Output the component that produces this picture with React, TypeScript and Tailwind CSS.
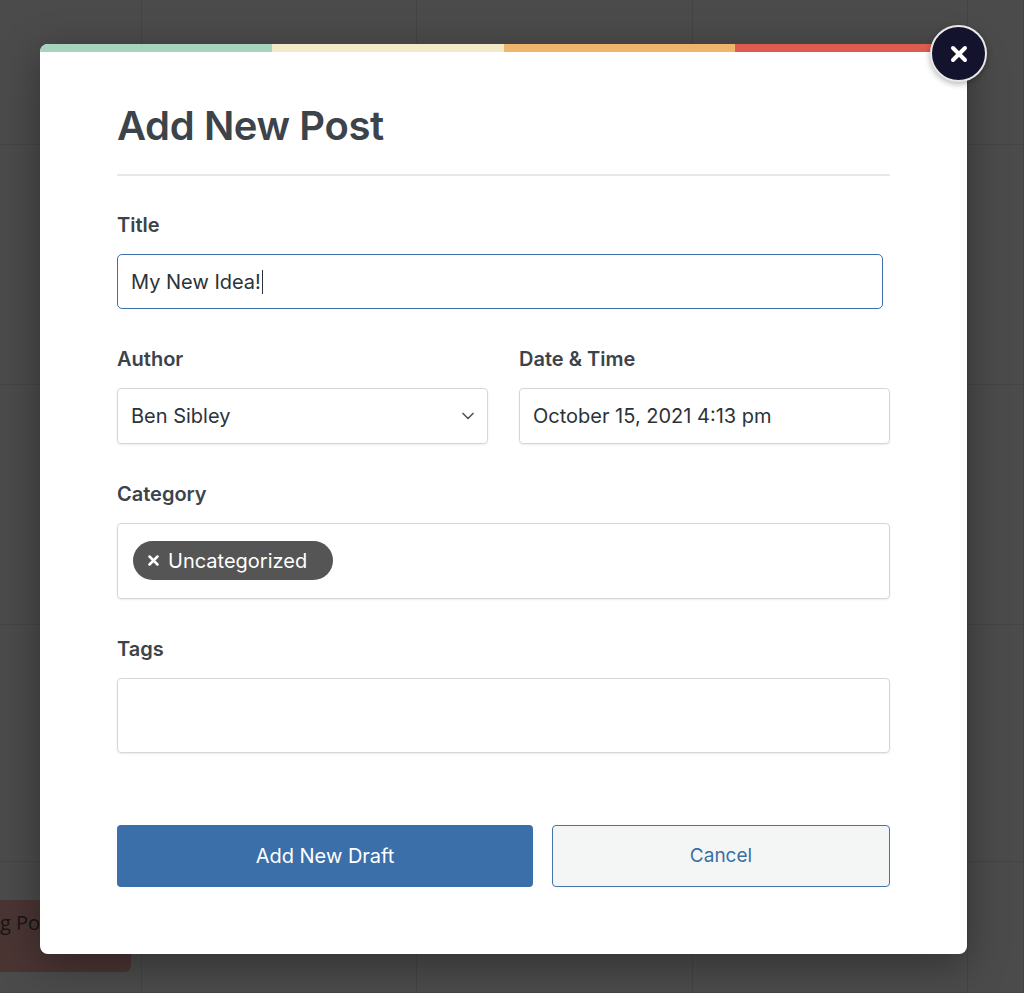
import { ChevronDown } from "lucide-react"

const cells = Array.from({ length: 25 }, (_, i) => i)

function Field({ label, children }: { label: string; children: React.ReactNode }) {
  return (
    <div className="mt-[36px]">
      <div className="text-[20px] leading-[28px] font-semibold text-[#3c434a] mb-[15px]">{label}</div>
      {children}
    </div>
  )
}

export default function App() {
  return (
    <div className="relative w-[1024px] h-[993px] overflow-hidden bg-[#4b4b4b] font-['Inter',sans-serif]">
      {/* calendar behind the overlay */}
      <div className="grid grid-cols-[142px_275px_276px_275px_1fr] grid-rows-[145px_240px_240px_237px_1fr] h-full">
        {cells.map((i) => (
          <div key={i} className="border-r border-b border-[#444444]">
            {i === 20 && (
              <div className="mt-[38px] h-[72px] w-[131px] bg-[#4a3533] rounded-br-md overflow-hidden">
                <div className="mt-[8px] whitespace-nowrap text-[20px] text-[#161616] font-['Open_Sans',sans-serif]">
                  g Post
                </div>
              </div>
            )}
          </div>
        ))}
      </div>

      {/* modal */}
      <div className="absolute left-[40px] top-[44px] w-[927px] bg-white rounded-lg shadow-[0_10px_40px_rgba(0,0,0,0.35)]">
        <div className="flex h-[8px] rounded-t-lg overflow-hidden">
          <div className="flex-1 bg-[#a6d4bc]"></div>
          <div className="flex-1 bg-[#f3e9c6]"></div>
          <div className="flex-1 bg-[#eeb56d]"></div>
          <div className="flex-1 bg-[#dc5d4f]"></div>
        </div>

        <button className="absolute -right-[20px] -top-[19px] w-[57px] h-[57px] rounded-full bg-[#14132e] border-2 border-[#e8e8e8] shadow-[0_2px_6px_rgba(0,0,0,0.3)] flex items-center justify-center">
          <svg width="18" height="18" viewBox="0 0 18 18">
            <path d="M3 3L15 15M15 3L3 15" stroke="white" strokeWidth="4" strokeLinecap="round" />
          </svg>
        </button>

        <div className="px-[77px] pt-[50px] pb-[67px]">
          <h1 className="text-[40px] leading-[48px] font-semibold tracking-[-0.4px] text-[#3c434a]">Add New Post</h1>
          <div className="mt-[24px] h-[2px] bg-[#e8e8e8]"></div>

          <div className="mt-[35px]">
            <div className="text-[20px] leading-[28px] font-semibold text-[#3c434a] mb-[15px]">Title</div>
            <div className="w-[766px] h-[55px] rounded-[5px] border-[1.5px] border-[#3d6fa8] flex items-center px-[13px] text-[20px] text-[#2c3338]">
              My New Idea!
              <span className="w-px h-[24px] bg-[#2c3338] ml-px"></span>
            </div>
          </div>

          <div className="mt-[36px] grid grid-cols-2 gap-[31px]">
            <div>
              <div className="text-[20px] leading-[28px] font-semibold text-[#3c434a] mb-[15px]">Author</div>
              <div className="h-[56px] rounded-[4px] border border-[#d6d6d6] shadow-[0_1px_2px_rgba(0,0,0,0.08)] flex items-center justify-between pl-[13px] pr-[9px] text-[20px] text-[#2c3338]">
                Ben Sibley
                <ChevronDown className="w-[20px] h-[20px] text-[#50575e]" strokeWidth={2} />
              </div>
            </div>
            <div>
              <div className="text-[20px] leading-[28px] font-semibold text-[#3c434a] mb-[15px]">Date &amp; Time</div>
              <div className="h-[56px] rounded-[4px] border border-[#d6d6d6] shadow-[0_1px_2px_rgba(0,0,0,0.08)] flex items-center px-[13px] text-[20px] text-[#2c3338]">
                October 15, 2021 4:13 pm
              </div>
            </div>
          </div>

          <Field label="Category">
            <div className="h-[76px] rounded-[4px] border border-[#d6d6d6] shadow-[0_1px_2px_rgba(0,0,0,0.08)] pt-[17px] pl-[15px]">
              <span className="inline-flex items-center h-[39px] rounded-full bg-[#555555] pl-[15px] pr-[26px] gap-[9px] text-[20px] text-white">
                <svg width="11" height="11" viewBox="0 0 11 11">
                  <path d="M1.5 1.5L9.5 9.5M9.5 1.5L1.5 9.5" stroke="white" strokeWidth="2.5" strokeLinecap="round" />
                </svg>
                Uncategorized
              </span>
            </div>
          </Field>

          <Field label="Tags">
            <div className="h-[75px] rounded-[4px] border border-[#d6d6d6] shadow-[0_1px_2px_rgba(0,0,0,0.08)]"></div>
          </Field>

          <div className="mt-[72px] flex gap-[19px]">
            <button className="w-[416px] h-[62px] rounded-[4px] bg-[#3b6faa] text-white text-[20px]">Add New Draft</button>
            <button className="flex-1 h-[62px] rounded-[4px] bg-[#f4f6f6] border-[1.5px] border-[#4275ae] text-[#3a6ea5] text-[19px]">
              Cancel
            </button>
          </div>
        </div>
      </div>
    </div>
  )
}
